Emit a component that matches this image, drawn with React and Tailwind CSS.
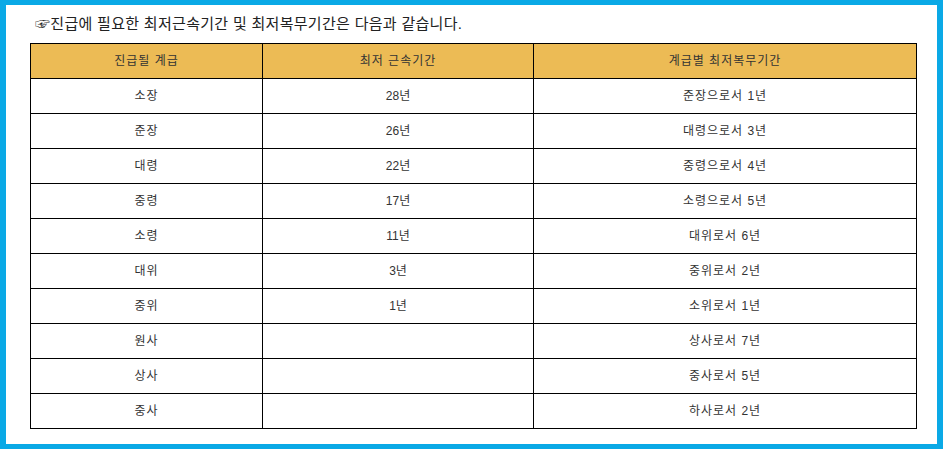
const rows = [
  ["소장", "28년", "준장으로서 1년"],
  ["준장", "26년", "대령으로서 3년"],
  ["대령", "22년", "중령으로서 4년"],
  ["중령", "17년", "소령으로서 5년"],
  ["소령", "11년", "대위로서 6년"],
  ["대위", "3년", "중위로서 2년"],
  ["중위", "1년", "소위로서 1년"],
  ["원사", "", "상사로서 7년"],
  ["상사", "", "중사로서 5년"],
  ["중사", "", "하사로서 2년"],
];

function App() {
  return (
    <div className="w-[945px] h-[452px] bg-white font-['Liberation_Sans','Noto_Sans_CJK_KR',sans-serif]">
      <div className="w-[943px] h-[449px] border-[#0aa9e6] border-x-[6px] border-y-[5px] pl-[24px] pr-[14px]">
        <p className="h-[38px] pt-[8px] pl-[5px] text-[15px] leading-[22px] tracking-[0.3px] text-[#222]">
          ☞진급에 필요한 최저근속기간 및 최저복무기간은 다음과 같습니다.
        </p>
        <table className="w-[887px] border-collapse table-fixed text-[12px] text-[#333] tracking-[1px]">
          <colgroup>
            <col className="w-[232px]" />
            <col className="w-[271px]" />
            <col />
          </colgroup>
          <thead>
            <tr className="h-[35px] bg-[#ecbb55]">
              <th className="border border-black font-normal">진급될 계급</th>
              <th className="border border-black font-normal">최저 근속기간</th>
              <th className="border border-black font-normal">계급별 최저복무기간</th>
            </tr>
          </thead>
          <tbody>
            {rows.map((r) => (
              <tr key={r[0]} className="h-[35px]">
                <td className="border border-black text-center">{r[0]}</td>
                <td className="border border-black text-center tracking-normal">{r[1]}</td>
                <td className="border border-black text-center">{r[2]}</td>
              </tr>
            ))}
          </tbody>
        </table>
      </div>
    </div>
  );
}

export default App;
